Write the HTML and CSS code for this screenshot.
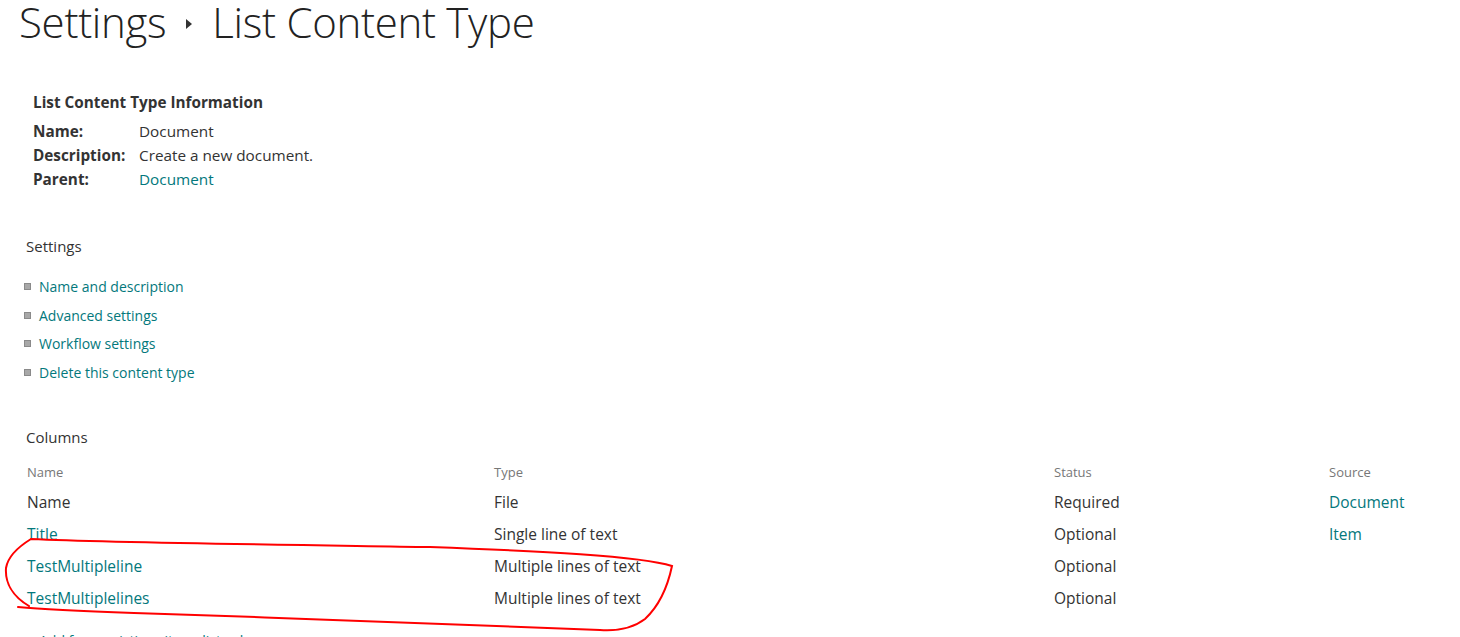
FILE: index.html
```html
<!DOCTYPE html>
<html lang="en">
<head>
    <meta charset="UTF-8">
    <title>Settings - List Content Type</title>
    <link rel="stylesheet" href="styles.css">
</head>
<body>
    <div class="page">
        <h1 class="page-title">
            <span>Settings</span>
            <span class="crumb-arrow"></span>
            <span>List Content Type</span>
        </h1>

        <div class="info">
            <h3>List Content Type Information</h3>
            <div class="info-row"><span class="info-label">Name:</span><span>Document</span></div>
            <div class="info-row"><span class="info-label">Description:</span><span>Create a new document.</span></div>
            <div class="info-row"><span class="info-label">Parent:</span><a href="#">Document</a></div>
        </div>

        <h2 class="section-title">Settings</h2>
        <ul class="link-list">
            <li><a href="#">Name and description</a></li>
            <li><a href="#">Advanced settings</a></li>
            <li><a href="#">Workflow settings</a></li>
            <li><a href="#">Delete this content type</a></li>
        </ul>

        <h2 class="section-title columns-title">Columns</h2>
        <div class="columns">
            <div class="col-head">Name</div>
            <div class="col-head">Type</div>
            <div class="col-head">Status</div>
            <div class="col-head">Source</div>

            <a href="#" class="plain">Name</a>
            <span>File</span>
            <span>Required</span>
            <a href="#">Document</a>

            <a href="#">Title</a>
            <span>Single line of text</span>
            <span>Optional</span>
            <a href="#">Item</a>

            <a href="#">TestMultipleline</a>
            <span>Multiple lines of text</span>
            <span>Optional</span>
            <span></span>

            <a href="#">TestMultiplelines</a>
            <span>Multiple lines of text</span>
            <span>Optional</span>
            <span></span>
        </div>

        <ul class="link-list more-links">
            <li><a href="#">Add from existing site or list columns</a></li>
        </ul>
    </div>

    <!-- hand drawn markup over the screenshot -->
    <svg class="scribble" width="1460" height="637" viewBox="0 0 1460 637">
        <path d="M31 539 C 120 543, 300 545, 430 547 C 540 551, 640 556, 672 566
                 C 668 585, 660 605, 645 619 C 632 629, 615 631, 600 630
                 C 500 627, 300 618, 134 613 C 80 611, 40 609, 18 607
                 M31 539 C 18 547, 8 556, 6 568 C 5 582, 12 596, 29 606"
              fill="none" stroke="#f00" stroke-width="2" stroke-linecap="round"/>
    </svg>
</body>
</html>
```

FILE: styles.css
```css
body {
    margin: 0;
    font-family: "Open Sans", "Noto Sans", sans-serif;
    font-size: 14px;
    color: #333;
    background-color: white;
    overflow: hidden;
}

a {
    color: #03787c;
    text-decoration: none;
}

.page {
    padding-left: 19px;
}

.page-title {
    margin: 0;
    display: flex;
    align-items: center;
    gap: 20px;
    font-size: 42px;
    font-weight: 300;
    line-height: 44px;
    color: #222;
    letter-spacing: -0.3px;
}

.crumb-arrow {
    width: 0;
    height: 0;
    margin-top: 4px;
    border-left: 6px solid #333;
    border-top: 5px solid transparent;
    border-bottom: 5px solid transparent;
}

.info {
    margin: 47px 0 0 14px;
    font-size: 15.3px;
}

.info h3 {
    margin: 0 0 6px;
    font-size: 15.3px;
    font-weight: 700;
    line-height: 22px;
}

.info-row {
    display: flex;
    line-height: 24px;
}

.info-label {
    width: 106px;
    font-weight: 700;
}

.section-title {
    margin: 44px 0 0 7px;
    font-size: 15px;
    font-weight: 400;
    line-height: 22px;
}

.link-list {
    list-style: none;
    margin: 15px 0 0 5px;
    padding: 0;
}

.link-list li {
    display: flex;
    align-items: center;
    gap: 8px;
    height: 28.7px;
}

.link-list li::before {
    content: "";
    width: 5px;
    height: 5px;
    background-color: #a8a8a8;
    border: 1px solid #8a8a8a;
}

.columns-title {
    margin-top: 39px;
}

.columns {
    display: grid;
    grid-template-columns: 467px 560px 275px 1fr;
    grid-template-rows: 35px;
    grid-auto-rows: 32px;
    align-items: center;
    margin: 3px 0 0 8px;
    font-size: 15.5px;
}

.col-head {
    align-self: start;
    padding-top: 7px;
    font-size: 13px;
    line-height: 28px;
    color: #777;
}

.columns .plain {
    color: #333;
}

.more-links {
    margin-top: 12px;
}

.scribble {
    position: absolute;
    left: 0;
    top: 0;
    pointer-events: none;
}
```
